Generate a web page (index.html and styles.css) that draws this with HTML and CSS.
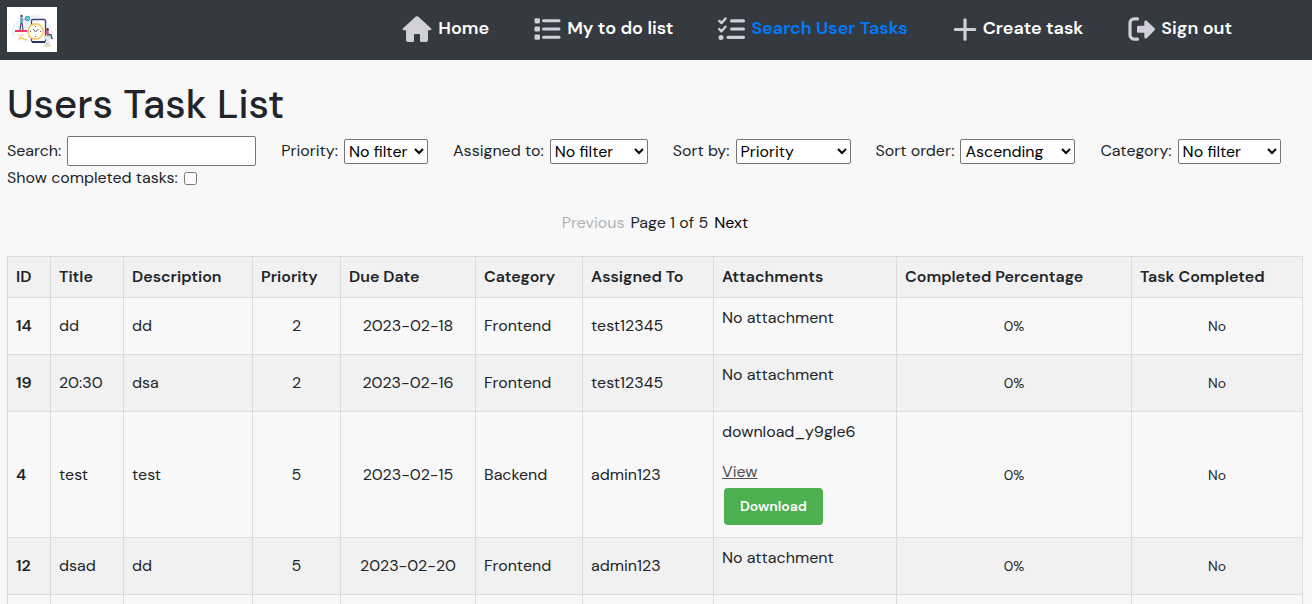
FILE: index.html
```html
<!DOCTYPE html>
<html lang="en">
<head>
<meta charset="utf-8">
<meta name="viewport" content="width=device-width, initial-scale=1">
<title>Users Task List</title>
<link rel="stylesheet" href="styles.css">
</head>
<body>
<header class="navbar">
  <a class="brand" href="#" aria-label="Tasks">
    <svg class="logo" viewBox="0 0 50 45" aria-hidden="true">
      <rect width="50" height="45" fill="#fff"/>
      <path d="M5 27C2 17 10 14 17 11c8-4 15-5 20 0 5 4 9 9 7 16-2 8-9 10-19 9-9-1-17 0-20-9z" fill="#f1f4fd"/>
      <rect x="24.500" y="12.500" width="14" height="22.500" rx="1.500" fill="#fff" stroke="#3d4470" stroke-width="1.300"/>
      <path d="M25 35h13" stroke="#2d345c" stroke-width="2"/>
      <rect x="8" y="24" width="13" height="10" fill="#fff"/>
      <path d="M8 24h14" stroke="#f0386b" stroke-width="2"/>
      <path d="M11 28h6M11 31h3" stroke="#f7c2cf"/>
      <path d="M12 33l2-3 2 2 4 1" stroke="#f8c94a" stroke-width="1.300" fill="none"/>
      <circle cx="14.500" cy="9" r="1.200" fill="#3b3357"/>
      <path d="M14.500 10.500v5.500" stroke="#5a9fc4" stroke-width="2.600"/>
      <path d="M14 16l-1 7M15 16l1 7" stroke="#4a5078" stroke-width="1.200"/>
      <path d="M16 13l3-1" stroke="#e79a87"/>
      <circle cx="20.500" cy="11.500" r="2.300" fill="#64c9e8" stroke="#4b97ba"/>
      <circle cx="28.500" cy="24.500" r="7.600" fill="#fff" stroke="#f8c95a" stroke-width="1.600"/>
      <path d="M28.500 19v1M28.500 29v1M23 24.500h1M33 24.500h1M26 22l2.500 3 3-3" stroke="#565875" fill="none"/>
      <circle cx="40.500" cy="22.500" r="1.500" fill="#713354"/>
      <path d="M40 24l1 4" stroke="#e9476d" stroke-width="2.600"/>
      <path d="M40 28h4l1 4" stroke="#3a609a" stroke-width="1.800" fill="none"/>
      <path d="M38 29h5v3l-2 2 2 2v3h-5v-3l2-2-2-2z" fill="#d6e9f5"/>
      <path d="M37 29h7M37 39h7M39 37h3" stroke="#e8c98a"/>
    </svg>
  </a>
  <nav class="nav">
    <a class="nav-link" href="#">
      <svg class="icon icon-home" viewBox="0 0 30 28" aria-hidden="true"><path d="M15 1.200a1.600 1.600 0 0 1 1.100.4L29 13.300c1 .9.400 2-.8 2H26V25a2 2 0 0 1-2 2h-4.500a1.500 1.500 0 0 1-1.500-1.500V20a1 1 0 0 0-1-1h-4a1 1 0 0 0-1 1v5.500a1.500 1.500 0 0 1-1.500 1.500H6a2 2 0 0 1-2-2v-9.700H1.800c-1.200 0-1.800-1.100-.8-2L13.900 1.600a1.600 1.600 0 0 1 1.100-.4z"/></svg>
      <span>Home</span>
    </a>
    <a class="nav-link" href="#">
      <svg class="icon" viewBox="0 0 27 24" aria-hidden="true"><rect x="0.500" y="1.200" width="5.500" height="5.200" rx="1.300"/><rect x="0.500" y="9.400" width="5.500" height="5.200" rx="1.300"/><rect x="0.500" y="17.600" width="5.500" height="5.200" rx="1.300"/><rect x="8" y="2.300" width="18.500" height="3" rx="1.500"/><rect x="8" y="10.500" width="18.500" height="3" rx="1.500"/><rect x="8" y="18.700" width="18.500" height="3" rx="1.500"/></svg>
      <span>My to do list</span>
    </a>
    <a class="nav-link active" href="#" aria-current="page">
      <svg class="icon" viewBox="0 0 27 24" aria-hidden="true"><path class="stroke" d="M1.300 3.900l2.200 2.200 4-4.600M1.300 12.100l2.200 2.200 4-4.600"/><circle cx="3" cy="20.500" r="2.500"/><rect x="12" y="2.300" width="15" height="3.200" rx="1.600"/><rect x="12" y="10.400" width="15" height="3.200" rx="1.600"/><rect x="8.500" y="18.700" width="18.500" height="3.200" rx="1.600"/></svg>
      <span>Search User Tasks</span>
    </a>
    <a class="nav-link" href="#">
      <svg class="icon icon-plus" viewBox="0 0 24 24" aria-hidden="true"><path class="stroke-wide" d="M12 2.800v19.400M2.300 12.500h19.400"/></svg>
      <span>Create task</span>
    </a>
    <a class="nav-link" href="#">
      <svg class="icon" viewBox="0 0 27 24" aria-hidden="true"><path class="stroke-wide" d="M9.500 1.900H6a4 4 0 0 0-4 4v12.200a4 4 0 0 0 4 4h3.500"/><path d="M9 10.200c0-.8.600-1.400 1.400-1.400h5.900V4.900c0-1.400 1.600-2 2.600-1l7.500 7.200c.8.700.8 1.700 0 2.500L18.900 21c-1 1-2.600.3-2.600-1.100v-4.100h-5.900c-.8 0-1.400-.6-1.400-1.400z"/></svg>
      <span>Sign out</span>
    </a>
  </nav>
</header>

<main class="page">
  <h1 class="title">Users Task List</h1>

  <form class="filters">
    <div class="field"><label for="search">Search:</label><input class="search" id="search" type="text"></div>
    <div class="field"><label for="priority">Priority:</label><select class="select w-priority" id="priority"><option>No filter</option></select></div>
    <div class="field"><label for="assigned">Assigned to:</label><select class="select w-assigned" id="assigned"><option>No filter</option></select></div>
    <div class="field"><label for="sort">Sort by:</label><select class="select w-sort" id="sort"><option>Priority</option></select></div>
    <div class="field"><label for="order">Sort order:</label><select class="select w-sort" id="order"><option>Ascending</option></select></div>
    <div class="field"><label for="category">Category:</label><select class="select w-category" id="category"><option>No filter</option></select></div>
    <div class="field field-check"><label for="completed">Show completed tasks:</label><input class="check" id="completed" type="checkbox"></div>
  </form>

  <div class="pagination">
    <button class="page-btn" type="button" disabled>Previous</button>
    <span>Page 1 of 5</span>
    <button class="page-btn" type="button">Next</button>
  </div>

  <table class="tasks">
    <colgroup>
      <col class="c-id"><col class="c-title"><col class="c-desc"><col class="c-prio"><col class="c-due"><col class="c-cat"><col class="c-user"><col class="c-files"><col class="c-pct"><col class="c-done">
    </colgroup>
    <thead>
      <tr><th>ID</th><th>Title</th><th>Description</th><th>Priority</th><th>Due Date</th><th>Category</th><th>Assigned To</th><th>Attachments</th><th>Completed Percentage</th><th>Task Completed</th></tr>
    </thead>
    <tbody>
      <tr><th scope="row">14</th><td>dd</td><td>dd</td><td class="center">2</td><td class="center">2023-02-18</td><td>Frontend</td><td>test12345</td><td><p class="file">No attachment</p></td><td class="center small">0%</td><td class="center small">No</td></tr>
      <tr><th scope="row">19</th><td>20:30</td><td>dsa</td><td class="center">2</td><td class="center">2023-02-16</td><td>Frontend</td><td>test12345</td><td><p class="file">No attachment</p></td><td class="center small">0%</td><td class="center small">No</td></tr>
      <tr><th scope="row">4</th><td>test</td><td>test</td><td class="center">5</td><td class="center">2023-02-15</td><td>Backend</td><td>admin123</td><td><p class="file">download_y9gle6</p><a class="view" href="#">View</a><button class="download" type="button">Download</button></td><td class="center small">0%</td><td class="center small">No</td></tr>
      <tr><th scope="row">12</th><td>dsad</td><td>dd</td><td class="center">5</td><td class="center">2023-02-20</td><td>Frontend</td><td>admin123</td><td><p class="file">No attachment</p></td><td class="center small">0%</td><td class="center small">No</td></tr>
      <tr><th scope="row"></th><td></td><td></td><td></td><td></td><td></td><td></td><td></td><td></td><td></td></tr>
    </tbody>
  </table>
</main>
</body>
</html>
```

FILE: styles.css
```css
*, *::before, *::after { box-sizing: border-box; }

body {
  margin: 0;
  background: #f8f8f8;
  color: #212529;
  font: 400 16px/24px "DM Sans", Inter, "Liberation Sans", sans-serif;
}

button, input, select { font: inherit; }

.navbar {
  display: flex;
  align-items: center;
  justify-content: space-between;
  min-height: 60px;
  padding: 0 80px 1px 7px;
  background: #343a40;
}

.brand, .logo { display: block; }
.logo { width: 50px; height: 45px; }

.nav { display: flex; gap: 45px; padding-bottom: 3px; }

.nav-link {
  display: flex;
  align-items: center;
  gap: 6px;
  color: #fff;
  font-size: 18px;
  font-weight: 600;
  line-height: 28px;
  text-decoration: none;
  white-space: nowrap;
}
.nav-link.active { color: #007bff; }

.icon { width: 27px; height: 24px; margin-top: 2px; fill: #d0d0d6; }
.icon-home { width: 30px; height: 28px; }
.icon-plus { width: 24px; }
.stroke, .stroke-wide {
  fill: none;
  stroke: #d0d0d6;
  stroke-width: 2.4;
  stroke-linecap: round;
  stroke-linejoin: round;
}
.stroke-wide { stroke-width: 3.2; }

.page { padding: 20px 9px 0 7px; }

.title {
  margin: 0 0 8px;
  font-size: 40px;
  font-weight: 500;
  line-height: 48px;
}

.filters { display: flex; flex-wrap: wrap; column-gap: 25px; }
.field { display: flex; align-items: center; gap: 6px; }
.field-check { flex-basis: 100%; }
.search {
  width: 189px;
  height: 30px;
  border: 1px solid #767676;
  border-radius: 2px;
  background: #fff;
}
.select {
  height: 25px;
  padding: 0;
  border: 1px solid #767676;
  border-radius: 2px;
  background-color: #fff;
  color: #000;
}
.w-priority { width: 84px; }
.w-assigned { width: 98px; }
.w-sort { width: 115px; }
.w-category { width: 103px; }
.check { width: 13px; height: 13px; margin: 0; }

.pagination {
  display: flex;
  justify-content: center;
  gap: 6px;
  margin: 21px 0;
}
.page-btn { padding: 0; border: 0; background: none; color: #000; }
.page-btn:disabled { color: #b3b3b3; }

.tasks {
  width: 100%;
  table-layout: fixed;
  border-collapse: collapse;
}
.tasks th, .tasks td {
  height: 57px;
  padding: 8px;
  border: 1px solid #dcdcdc;
  text-align: left;
  vertical-align: middle;
}
.tasks th { font-weight: 600; white-space: nowrap; }
.tasks thead th { height: 41px; background: #f1f1f1; }
.tasks tbody tr:nth-child(even) { background: #f1f1f1; }
.tasks .center { text-align: center; }
.tasks .small { font-size: 14px; }

.c-id { width: 43px; }
.c-title { width: 73px; }
.c-desc { width: 129px; }
.c-prio { width: 88px; }
.c-due { width: 135px; }
.c-cat { width: 107px; }
.c-user { width: 131px; }
.c-files { width: 183px; }
.c-pct { width: 235px; }
.c-done { width: 171px; }

.file { margin: 0 0 16px; }
.view { color: #505050; text-decoration: underline; }
.download {
  display: block;
  margin: 4px 2px;
  padding: 8px 16px;
  border: 0;
  border-radius: 4px;
  background: #4caf50;
  color: #fff;
  font-size: 14px;
  font-weight: 600;
  line-height: 21px;
}
```
